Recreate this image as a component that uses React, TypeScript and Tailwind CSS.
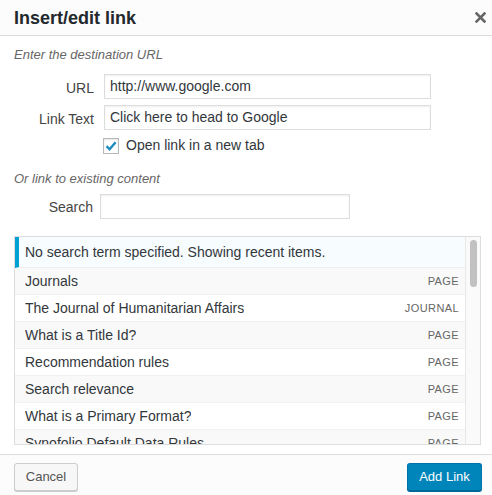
import React from "react";

const rows: { title: string; type: string }[] = [
  { title: "Journals", type: "Page" },
  { title: "The Journal of Humanitarian Affairs", type: "Journal" },
  { title: "What is a Title Id?", type: "Page" },
  { title: "Recommendation rules", type: "Page" },
  { title: "Search relevance", type: "Page" },
  { title: "What is a Primary Format?", type: "Page" },
  { title: "Synofolio Default Data Rules", type: "Page" },
];

export default function App() {
  return (
    <div
      className="w-[492px] h-[495px] bg-white flex flex-col overflow-hidden text-[#32373c]"
      style={{ fontFamily: '"Liberation Sans", Arial, sans-serif' }}
    >
      {/* Header */}
      <div className="h-[36px] shrink-0 flex items-center justify-between pl-[14px] pr-[0px] bg-[#fcfcfc] border-b border-[#dddddd]">
        <h1 className="text-[18px] font-bold text-[#23282d] leading-none">Insert/edit link</h1>
        <button className="w-[24px] h-[24px] flex items-center justify-center">
          <svg width="11" height="11" viewBox="0 0 11 11">
            <path d="M1.5 1.5 L9.5 9.5 M9.5 1.5 L1.5 9.5" stroke="#666" strokeWidth="2.6" strokeLinecap="square" />
          </svg>
        </button>
      </div>

      {/* Body */}
      <div className="flex-1 flex flex-col pl-[14px] pr-[11px] pt-[10px] min-h-0">
        <p className="italic text-[13px] text-[#666] leading-[18px]">Enter the destination URL</p>

        <div className="mt-[10px] flex items-center">
          <label className="w-[80px] text-right text-[14px] text-[#444] pt-[4px]">URL</label>
          <div className="ml-[10px] w-[327px] h-[25px] border border-[#dddddd] shadow-[inset_0_1px_2px_rgba(0,0,0,0.07)] flex items-center px-[5px] text-[14px] text-[#32373c]">
            http://www.google.com
          </div>
        </div>

        <div className="mt-[6px] flex items-center">
          <label className="w-[80px] text-right text-[14px] text-[#444] pt-[4px]">Link Text</label>
          <div className="ml-[10px] w-[327px] h-[25px] border border-[#dddddd] shadow-[inset_0_1px_2px_rgba(0,0,0,0.07)] flex items-center px-[5px] text-[14px] text-[#32373c]">
            Click here to head to Google
          </div>
        </div>

        <div className="mt-[5px] flex items-center ml-[89px]">
          <div className="w-[16px] h-[16px] border border-[#b4b9be] bg-white shadow-[inset_0_1px_2px_rgba(0,0,0,0.1)] flex items-center justify-center">
            <svg width="14" height="14" viewBox="0 0 14 14">
              <path d="M2.5 7.2 L5.6 10.3 L11.6 3.2" stroke="#1e8cbe" strokeWidth="2.4" fill="none" />
            </svg>
          </div>
          <span className="ml-[7px] text-[14px] text-[#32373c]">Open link in a new tab</span>
        </div>

        <p className="mt-[14px] italic text-[13px] text-[#666] leading-[18px]">Or link to existing content</p>

        <div className="mt-[6px] flex items-center">
          <label className="w-[79px] text-right text-[14px] text-[#444] pt-[2px]">Search</label>
          <div className="ml-[7px] w-[250px] h-[25px] border border-[#dddddd] shadow-[inset_0_1px_2px_rgba(0,0,0,0.07)]" />
        </div>

        {/* Results */}
        <div className="mt-[17px] h-[209px] border border-[#dddddd] flex overflow-hidden">
          <div className="flex-1 flex flex-col min-w-0">
            <div className="h-[31px] shrink-0 bg-[#f7fcfe] border-l-[4px] border-[#00a0d2] border-b border-b-[#eeeeee] flex items-center pl-[6px] text-[14px] text-[#32373c]">
              No search term specified. Showing recent items.
            </div>
            {rows.map((r, i) => (
              <div
                key={r.title}
                className={
                  "h-[27px] shrink-0 flex items-center justify-between pl-[10px] pr-[6px] border-b border-[#f1f1f1] " +
                  (i % 2 === 0 ? "bg-[#f9f9f9]" : "bg-white")
                }
              >
                <span className="text-[14px] text-[#32373c] truncate">{r.title}</span>
                <span className="text-[11px] uppercase text-[#666] tracking-[0.4px]">{r.type}</span>
              </div>
            ))}
          </div>
          <div className="w-[15px] shrink-0 bg-[#fafafa] border-l border-[#e8e8e8] pt-[3px] flex justify-center">
            <div className="w-[7px] h-[47px] rounded-full bg-[#c1c1c1]" />
          </div>
        </div>
      </div>

      {/* Footer */}
      <div className="h-[41px] shrink-0 bg-[#fcfcfc] border-t border-[#dddddd] flex items-start justify-between pl-[14px] pr-[10px] pt-[8px]">
        <button className="w-[64px] h-[28px] border border-[#cccccc] rounded-[3px] bg-[#f7f7f7] shadow-[0_1px_0_#cccccc] text-[13px] text-[#555]">
          Cancel
        </button>
        <button className="w-[75px] h-[28px] rounded-[3px] bg-[#0085ba] border border-[#0073aa] border-b-[#006799] shadow-[0_1px_0_#006799] text-[13px] text-white">
          Add Link
        </button>
      </div>
    </div>
  );
}
